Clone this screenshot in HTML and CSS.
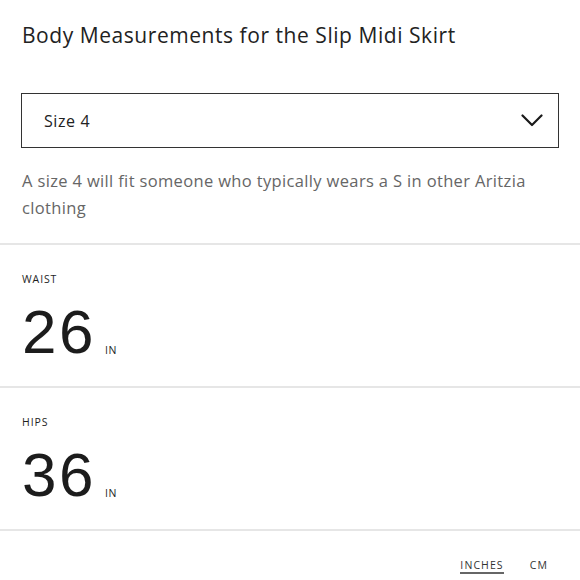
FILE: index.html
```html
<!DOCTYPE html>
<html lang="en">
<head>
<meta charset="utf-8">
<title>Body Measurements</title>
<link rel="stylesheet" href="styles.css">
</head>
<body>
<main class="sheet">
  <h1 class="title">Body Measurements for the Slip Midi Skirt</h1>
  <div class="select">
    <span class="select-value">Size 4</span>
    <svg class="chevron" width="22" height="13" viewBox="0 0 22 13" aria-hidden="true">
      <path d="M1.5 1.5 L11 11 L20.5 1.5" fill="none" stroke="#1a1a1a" stroke-width="2.2" stroke-linecap="round" stroke-linejoin="round"/>
    </svg>
  </div>
  <p class="desc">A size 4 will fit someone who typically wears a S in other Aritzia clothing</p>
  <section class="measure">
    <div class="label">WAIST</div>
    <div class="value"><span class="num">26</span><span class="unit">IN</span></div>
  </section>
  <section class="measure">
    <div class="label">HIPS</div>
    <div class="value"><span class="num">36</span><span class="unit">IN</span></div>
  </section>
  <div class="units">
    <span class="unit-opt active">INCHES</span>
    <span class="unit-opt">CM</span>
  </div>
</main>
</body>
</html>
```

FILE: styles.css
```css
html, body {
  margin: 0;
  padding: 0;
  background: #fff;
}

body {
  font-family: "Open Sans", "Liberation Sans", sans-serif;
  color: #222;
}

.sheet {
  display: flex;
  flex-direction: column;
}

.title {
  margin: 21px 22px 0;
  font-size: 21px;
  line-height: 28px;
  font-weight: 400;
  letter-spacing: 0.55px;
  color: #222;
}

.select {
  margin: 44px 21px 0;
  height: 55px;
  box-sizing: border-box;
  border: 1.5px solid #333;
  display: flex;
  align-items: center;
  justify-content: space-between;
  padding: 0 15px 0 22px;
}

.select-value {
  font-size: 16px;
  letter-spacing: 0.6px;
  color: #222;
}

.chevron {
  display: block;
}

.desc {
  margin: 19px 22px 0;
  font-size: 16.5px;
  line-height: 27px;
  letter-spacing: 0.35px;
  color: #666;
}

.measure {
  margin-top: 22px;
  border-top: 2px solid #e6e6e6;
  padding: 27px 22px 0;
  height: 143px;
  box-sizing: border-box;
  display: flex;
  flex-direction: column;
}

.measure + .measure {
  margin-top: 0;
}

.label {
  font-size: 10.5px;
  line-height: 14px;
  letter-spacing: 0.9px;
  color: #1e1e1e;
}

.value {
  margin-top: 15px;
  display: flex;
  align-items: baseline;
  gap: 9px;
}

.num {
  font-family: "Liberation Sans", Arial, sans-serif;
  font-size: 62px;
  line-height: 62px;
  color: #1c1c1c;
  letter-spacing: 2.5px;
}

.unit {
  font-size: 10.5px;
  letter-spacing: 0.5px;
  color: #222;
  position: relative;
  top: 1px;
}

.units {
  border-top: 2px solid #e6e6e6;
  display: flex;
  justify-content: flex-end;
  gap: 26px;
  padding: 27px 32px 0 0;
}

.unit-opt {
  font-size: 10.5px;
  line-height: 14px;
  letter-spacing: 1.1px;
  color: #333;
}

.unit-opt.active {
  border-bottom: 2px solid #666;
}
```
